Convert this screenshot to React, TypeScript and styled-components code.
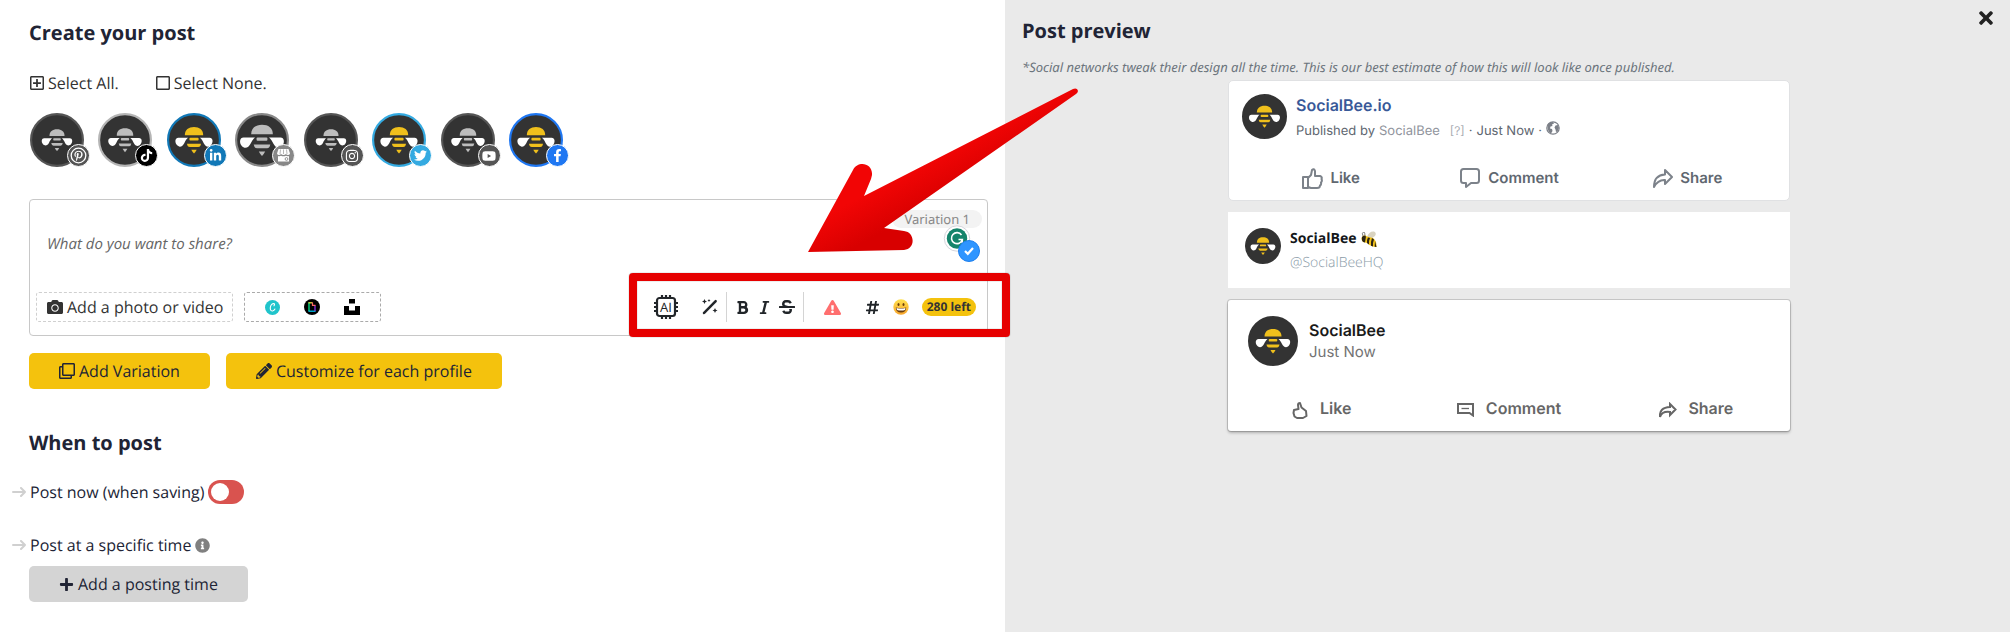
import React, { useState } from 'react';
import styled, { createGlobalStyle } from 'styled-components';
import {
  FaBold, FaItalic, FaStrikethrough, FaHashtag, FaCamera, FaRegClone, FaPencilAlt, FaPlus,
  FaInfoCircle, FaRegPlusSquare, FaRegSquare, FaPinterestP, FaTiktok, FaLinkedinIn,
  FaInstagram, FaTwitter, FaYoutube, FaFacebookF, FaExclamationTriangle, FaTimes,
} from 'react-icons/fa';

const sans = '"Open Sans", "Noto Sans", sans-serif';
const compact = '"Noto Sans", "Open Sans", sans-serif';
const ui = 'Inter, "Liberation Sans", sans-serif';

const Global = createGlobalStyle`
  * { box-sizing: border-box; }
  body {
    margin: 0;
    background: #fff;
    color: #212435;
    font: 16px/24px ${sans};
    text-rendering: geometricPrecision;
  }
  button, textarea { font: inherit; color: inherit; text-rendering: inherit; }
  button { background: none; border: 0; padding: 0; cursor: pointer; white-space: nowrap; }
  a { text-decoration: none; color: inherit; }
  svg { display: block; flex: none; }
`;

const Page = styled.div`
  display: grid;
  grid-template-columns: 1fr 1fr;
  min-height: 100vh;
`;

const Composer = styled.main`
  display: flex;
  flex-direction: column;
  align-items: flex-start;
  padding: 19px 17px 30px 29px;
`;

const Heading = styled.h2`
  margin: 0;
  font-size: 20px;
  line-height: 28px;
  font-weight: 700;
`;

const SelectRow = styled.div`
  display: flex;
  gap: 36px;
  margin: 24px 0 18px;
  color: #333;
`;

const SelectButton = styled.button`
  display: flex;
  align-items: center;
  gap: 3px;
`;

const Profiles = styled.div`
  display: flex;
  justify-content: space-between;
  width: 100%;
  max-width: 534px;
  padding-left: 1px;
`;

const Profile = styled.button`
  position: relative;
  width: 54px;
  height: 54px;
`;

const Badge = styled.span<{ $bg: string }>`
  position: absolute;
  right: -6px;
  bottom: 0;
  display: flex;
  align-items: center;
  justify-content: center;
  width: 23px;
  height: 23px;
  border: 1px solid #fff;
  border-radius: 50%;
  background: ${(p) => p.$bg};
  color: #fff;
`;

const Editor = styled.section`
  position: relative;
  display: flex;
  flex-direction: column;
  width: 100%;
  margin-top: 32px;
  border: 1px solid #c8c8c8;
  border-radius: 4px;
`;

const EditorBody = styled.div`
  display: flex;
  align-items: flex-start;
  height: 92px;
  padding: 10px 5px 0 17px;
`;

const PostText = styled.textarea`
  flex: 1;
  height: 60px;
  margin-top: 22px;
  padding: 0;
  border: 0;
  outline: 0;
  resize: none;
  background: transparent;
  font-size: 15px;
  &::placeholder { color: #666; font-style: italic; opacity: 1; }
`;

const VariationTag = styled.span`
  padding: 0 12px;
  border-radius: 9px;
  background: #f3f3f3;
  color: #888;
  font-family: ${compact};
  font-size: 13px;
  line-height: 18px;
`;

const Assistant = styled.div`
  position: absolute;
  right: 6px;
  top: 25px;
`;

const EditorFooter = styled.div`
  display: flex;
  align-items: center;
  justify-content: space-between;
  padding: 0 11px 13px 6px;
`;

const Row = styled.div<{ $gap: number }>`
  display: flex;
  align-items: center;
  gap: ${(p) => p.$gap}px;
`;

const PhotoButton = styled.button`
  display: flex;
  align-items: center;
  gap: 4px;
  height: 30px;
  padding: 0 9px 0 10px;
  border: 1px dashed #d0d0d0;
  border-radius: 3px;
  color: #333;
`;

const Sources = styled.div`
  display: flex;
  align-items: center;
  gap: 24px;
  height: 30px;
  padding: 0 20px;
  border: 1px dashed #aaa;
  border-radius: 3px;
`;

const ToolGroup = styled.div<{ $gap: number; $divided?: boolean; $left?: number }>`
  display: flex;
  align-items: center;
  gap: ${(p) => p.$gap}px;
  height: 30px;
  padding: 0 ${(p) => (p.$divided ? 8 : 0)}px 0 ${(p) => p.$left ?? 8}px;
  color: #212529;
  ${(p) => p.$divided && 'border-right: 1px solid #d4d4d4;'}
`;

const Counter = styled.span`
  padding: 0 5px;
  border-radius: 9px;
  background: #f4c20d;
  color: #333;
  font-size: 12px;
  line-height: 18px;
  font-weight: 700;
  white-space: nowrap;
`;

const Highlight = styled.div`
  position: absolute;
  right: -23px;
  top: 73px;
  width: 381px;
  height: 64px;
  border: 8px solid #e60000;
  border-radius: 4px;
  box-shadow: 0 0 1px #555, inset 0 0 1px #555;
  pointer-events: none;
`;

const Pointer = styled.svg`
  position: absolute;
  right: -94px;
  top: -119px;
  pointer-events: none;
`;

const Actions = styled.div`
  display: flex;
  gap: 16px;
  margin: 17px 0 40px;
`;

const ActionButton = styled.button<{ $plain?: boolean }>`
  display: flex;
  align-items: center;
  gap: 4px;
  height: 36px;
  padding: 0 30px;
  border-radius: 5px;
  background: ${(p) => (p.$plain ? '#d4d4d4' : '#f4c20d')};
`;

const Option = styled.div<{ $top: number }>`
  display: flex;
  align-items: center;
  gap: 4px;
  margin: ${(p) => p.$top}px 0 0 -17px;
`;

const Switch = styled.input`
  appearance: none;
  width: 36px;
  height: 24px;
  margin: 0;
  padding: 3px;
  border-radius: 12px;
  background: #d9534f;
  cursor: pointer;
  &::before {
    content: '';
    display: block;
    width: 18px;
    height: 18px;
    border-radius: 50%;
    background: #fff;
  }
  &:checked { background: #5cb85c; padding-left: 15px; }
`;

const TimeRow = styled.div`
  margin-top: 9px;
`;

const Preview = styled.aside`
  display: flex;
  flex-direction: column;
  padding: 8px 14px 30px 17px;
  background: #eaeaea;
`;

const PreviewHeader = styled.header`
  display: flex;
  justify-content: space-between;
  align-items: flex-start;
`;

const PreviewTitle = styled(Heading)`
  padding-top: 9px;
`;

const Note = styled.p`
  margin: 10px 0 1px;
  color: #6c757d;
  font-family: ${compact};
  font-size: 13px;
  line-height: 24px;
  font-style: italic;
`;

const Cards = styled.div`
  display: flex;
  flex-direction: column;
  width: 100%;
  max-width: 562px;
  margin: 0 auto;
  font-family: ${ui};
`;

const FacebookCard = styled.article`
  height: 121px;
  padding: 13px 12px 0 13px;
  border: 1px solid #e0e1e3;
  border-radius: 5px;
  background: #fff;
  color: #606770;
`;

const TwitterCard = styled.article`
  display: flex;
  gap: 9px;
  height: 76px;
  margin: 11px 0 12px;
  padding: 16px 17px;
  background: #fff;
  font-family: ${sans};
`;

const LinkedinCard = styled.article`
  height: 131px;
  padding: 16px 0 0;
  border-radius: 3px;
  background: #fff;
  box-shadow: 0 0 0 1px rgba(0, 0, 0, 0.15), 0 2px 3px rgba(0, 0, 0, 0.25);
  color: #666;
`;

const CardHead = styled.div<{ $gap: number; $inset?: number; $center?: boolean }>`
  display: flex;
  align-items: ${(p) => (p.$center ? 'center' : 'flex-start')};
  gap: ${(p) => p.$gap}px;
  padding-left: ${(p) => p.$inset ?? 0}px;
`;

const Name = styled.a<{ $color: string; $size?: number; $weight?: number }>`
  display: flex;
  align-items: center;
  gap: 4px;
  color: ${(p) => p.$color};
  font-size: ${(p) => p.$size ?? 16}px;
  line-height: 22px;
  font-weight: ${(p) => p.$weight ?? 600};
`;

const Meta = styled.div`
  display: flex;
  align-items: center;
  gap: 4px;
  margin-top: 4px;
  font-size: 13px;
  line-height: 22px;
  & > svg { margin-bottom: 6px; }
`;

const Muted = styled.span`
  color: #90949c;
  margin-right: 6px;
`;

const Small = styled.span`
  color: #a9acb2;
  font-size: 12px;
`;

const Handle = styled.div`
  color: #8899a6;
  font-size: 14px;
  line-height: 26px;
  font-weight: 300;
`;

const When = styled.div`
  font-size: 15px;
  line-height: 22px;
  color: #737373;
`;

const Reactions = styled.div<{ $top: number }>`
  display: grid;
  grid-template-columns: repeat(3, 1fr);
  justify-items: center;
  margin-top: ${(p) => p.$top}px;
`;

const Reaction = styled.button<{ $gap: number; $size: number; $low?: boolean }>`
  display: flex;
  align-items: center;
  gap: ${(p) => p.$gap}px;
  font-size: ${(p) => p.$size}px;
  font-weight: 600;
  & > svg { margin-top: ${(p) => (p.$low ? 4 : 0)}px; }
`;

type BeeProps = { size: number; ring?: string; color?: string; scale?: number };

const Bee = ({ size, ring = '#333', color = '#f0c01c', scale = 1 }: BeeProps) => (
  <svg width={size} height={size} viewBox="-50 -50 100 100" aria-hidden="true">
    <circle r="48" fill="#333" stroke={ring} strokeWidth="4" />
    <g transform={`scale(${scale})`}>
      <path d="M-17-9C-17-19-10-24 0-24S17-19 17-9Z" fill={color} />
      <rect x="-8.500" y="-4" width="17" height="5" rx="1.500" fill={color} />
      <path d="M-11-4H-29C-35-4-36 4-32 9C-27 15-21 12-18 6C-16 2-14-2-11-4Z" fill="#fff" />
      <path d="M11-4H29C35-4 36 4 32 9C27 15 21 12 18 6C16 2 14-2 11-4Z" fill="#fff" />
      <path d="M-13 7H13Q12 13 8 13H-8Q-12 13-13 7Z" fill={color} />
      <path d="M-5 18H5Q3 22 0 25Q-3 22-5 18Z" fill={color} />
    </g>
  </svg>
);

const AiChip = () => (
  <svg width="24" height="24" viewBox="0 0 24 24" fill="none" stroke="#212529" strokeWidth="2.200">
    <rect x="3" y="3" width="18" height="18" rx="2.500" />
    <path d="M8 0v3M12 0v3M16 0v3M8 21v3M12 21v3M16 21v3M0 8h3M0 12h3M0 16h3M21 8h3M21 12h3M21 16h3" />
    <text x="12" y="16.500" textAnchor="middle" fontSize="13" fontWeight="500" fontFamily="Open Sans" fill="#212529" stroke="none">AI</text>
  </svg>
);

const Wand = () => (
  <svg width="16" height="16" viewBox="0 0 16 16" fill="#212529">
    <path d="M1 13.200L12.800 1.200Q13.600.400 14.500 1.200Q15.300 2 14.600 2.900L3 14.800Q2 15.600 1.200 14.900Q.3 14.100 1 13.200Z" />
    <path d="M2.500 0l.8 1.700L5 2.500l-1.700.8L2.500 5l-.8-1.700L0 2.500l1.700-.8ZM7 0l.5 1L8.500 1.500 7.500 2 7 3l-.5-1-1-.5 1-.5ZM13 9l.8 1.700 1.700.8-1.700.8L13 14l-.8-1.700-1.700-.8 1.700-.8Z" />
  </svg>
);

const Grin = () => (
  <svg width="16" height="16" viewBox="0 0 16 16">
    <defs>
      <linearGradient id="face" x1="0" y1="0" x2="0" y2="1">
        <stop offset="0" stopColor="#ffe14f" />
        <stop offset="1" stopColor="#f7a52b" />
      </linearGradient>
    </defs>
    <circle cx="8" cy="8" r="7.700" fill="url(#face)" />
    <ellipse cx="5.500" cy="5.500" rx="1" ry="1.600" fill="#6b3d0c" />
    <ellipse cx="10.500" cy="5.500" rx="1" ry="1.600" fill="#6b3d0c" />
    <path d="M2.800 8.500Q8 9.500 13.200 8.500Q13 13.500 8 13.500T2.800 8.500Z" fill="#6b3d0c" />
    <path d="M3.500 9Q8 10 12.500 9L12 11Q8 12 4 11Z" fill="#fff" />
  </svg>
);

const BeeEmoji = () => (
  <svg width="16" height="17" viewBox="0 0 16 17">
    <path d="M6 6Q8 0 13 .5Q16 2 14 5Q11 8 7 7Z" fill="#d9d3c0" />
    <path d="M1 6Q3 3 6 5.500L12 7Q16 10 15.500 16Q10 16 6 12L2 11Q-.5 8 1 6Z" fill="#f2c21a" />
    <path d="M1 6Q3 4 5 5.500L4 11.500Q0 11 1 6ZM7 6.500L9 7Q7.500 10 8 13.500L6 12Q5.500 9 7 6.500ZM11 7L13 8.500Q11.500 12 12 15.500L10 14.800Q9.500 11 11 7ZM14 10L15.500 16L13.700 15.800Z" fill="#2b2415" />
    <path d="M2 5Q.5 2 2.500 1M4 5Q4 2 3 1" stroke="#444" strokeWidth=".7" fill="none" />
  </svg>
);

const Canva = () => (
  <svg width="15" height="15" viewBox="0 0 15 15">
    <circle cx="7.500" cy="7.500" r="7.500" fill="#20c4cb" />
    <path d="M9 5.800Q10.300 3.800 8.600 3.600C6.500 3.500 5 6.500 5.300 8.800Q5.800 11.500 8 10.800Q9.300 10.300 9.900 9" fill="none" stroke="#fff" strokeWidth="1.100" strokeLinecap="round" />
  </svg>
);

const Giphy = () => (
  <svg width="16" height="16" viewBox="0 0 16 16" fill="none" strokeWidth="1.200">
    <circle cx="8" cy="8" r="8" fill="#000" />
    <path d="M5 3.500V12" stroke="#0f9" />
    <path d="M4.400 12.200H11.600" stroke="#0cf" />
    <path d="M11 6.500V12" stroke="#93f" />
    <path d="M4.400 3.800H8.500" stroke="#ee4" />
    <path d="M8.500 3.500V6.300H11.500" stroke="#f66" />
  </svg>
);

const Unsplash = () => (
  <svg width="16" height="16" viewBox="0 0 16 16"><path d="M5 0h6v4.500H5zM0 7h5v4.500h6V7h5v9H0z" /></svg>
);

const Arrow = () => (
  <svg width="14" height="10" viewBox="0 0 14 10" fill="none" stroke="#d0d0d0" strokeWidth="2" strokeLinecap="round" strokeLinejoin="round">
    <path d="M1 5H13M9 1L13 5L9 9" />
  </svg>
);

const Globe = () => (
  <svg width="14" height="14" viewBox="0 0 14 14">
    <circle cx="7" cy="7" r="6.200" fill="#fff" stroke="#7b7f87" strokeWidth="1.200" />
    <path d="M1.500 4Q3 1 7 1L8 2.500L6 3.500L6.500 5L4.500 5.500L4 7.500L6 8L6.500 10L5 12.500Q1 10.500 1.500 4ZM9.500 4.500L12 4L13 7L11.500 10.500L10 11L9.500 8.500L8.500 6.500Z" fill="#7b7f87" />
  </svg>
);

const line = { fill: 'none', stroke: '#7c828a', strokeWidth: 2, strokeLinejoin: 'round' as const };

const FbLike = () => (
  <svg width="21" height="21" viewBox="0 0 21 21" {...line}>
    <path d="M1 9H6V20H1ZM6 10L9 7L10 2Q12 0 13 3V8H18Q20.500 9 19.500 11Q20.500 13 19 14.500Q19.500 17 18 17.500Q18 20 15 20H9L6 19" />
  </svg>
);
const FbComment = () => (
  <svg width="20" height="20" viewBox="0 0 20 20" {...line}>
    <path d="M3.500 1H16.500Q19 1 19 3.500V12.500Q19 15 16.500 15H11L6 19V15H3.500Q1 15 1 12.500V3.500Q1 1 3.500 1Z" />
  </svg>
);
const FbShare = () => (
  <svg width="20" height="19" viewBox="0 0 20 19" {...line}>
    <path d="M12 1L19 8L12 15V11Q5 10.500 1 18Q1 6 12 5.500Z" />
  </svg>
);
const InLike = () => (
  <svg width="16" height="17" viewBox="0 0 16 17" fill="none" stroke="#666" strokeWidth="2">
    <path d="M2 8L6.500 7L6 3Q6 1 8 1L9.500 5.500L14 9L14.500 14L11 16H5L2.500 14.500L1.500 11Z" strokeLinejoin="round" />
  </svg>
);
const InComment = () => (
  <svg width="17" height="14" viewBox="0 0 17 14" fill="none" stroke="#666" strokeWidth="2">
    <path d="M1 1H16V12.500L12.500 10H1Z" />
    <path d="M4.500 5.500H12" strokeWidth="1.300" />
  </svg>
);
const InShare = () => (
  <svg width="18" height="16" viewBox="0 0 18 16" fill="none" stroke="#666" strokeWidth="2">
    <path d="M11 2L16.500 7.500L11 13V10Q3 9 1 15Q0 5.500 11 5Z" />
  </svg>
);

const Grammar = () => (
  <svg width="38" height="38" viewBox="0 0 38 38">
    <circle cx="14" cy="13.500" r="12.700" fill="#fff" stroke="#d5d5dc" />
    <circle cx="14" cy="13.500" r="10.200" fill="#15846b" />
    <path d="M18.500 10A5.500 5.500 0 1 0 19.300 14.500H15.500M19.300 14V18" fill="none" stroke="#fff" strokeWidth="1.600" />
    <circle cx="26" cy="26" r="10.500" fill="#2e95ff" stroke="#1f80ee" />
    <path d="M22 26L24.800 28.800L30 23" fill="none" stroke="#fff" strokeWidth="2.200" />
  </svg>
);

const RingedPin = () => (
  <svg width="17" height="17" viewBox="0 0 17 17">
    <circle cx="8.500" cy="8.500" r="7.300" fill="none" stroke="#fff" strokeWidth="1.300" />
    <FaPinterestP x="3" y="3.500" size={11} />
  </svg>
);

const Shop = () => (
  <svg width="13" height="13" viewBox="0 0 13 13" fill="#fff">
    <path d="M1.500 0H11.500L13 4.500Q12.500 6 11 6Q9.700 6 9 5Q8 6 6.500 6T4 5Q3.300 6 2 6Q.5 6 0 4.500Z" />
    <path d="M1 7Q3 7.500 4 6.700Q6.500 8 9 6.700Q10.500 7.500 12 7V12.500H1Z" />
    <path d="M3.500.5L3 5M6.500.5V5M9.500.5L10 5" stroke="#888" strokeWidth=".6" />
    <circle cx="9.500" cy="10" r="1.400" fill="none" stroke="#888" strokeWidth=".9" />
  </svg>
);

const silver = '#bdbdbd';
const profiles = [
  { name: 'Pinterest', ring: '#555', bg: '#555', color: silver, scale: 0.82, icon: <RingedPin /> },
  { name: 'TikTok', ring: '#b5b5b5', bg: '#000', color: silver, scale: 0.9, icon: <FaTiktok size={13} /> },
  { name: 'LinkedIn', ring: '#1178b7', bg: '#1178b7', scale: 1, icon: <FaLinkedinIn size={13} /> },
  { name: 'Google Business Profile', ring: '#888', bg: '#888', color: silver, scale: 1.18, icon: <Shop /> },
  { name: 'Instagram', ring: '#555', bg: '#555', color: silver, scale: 0.82, icon: <FaInstagram size={14} /> },
  { name: 'Twitter', ring: '#34aae1', bg: '#34aae1', scale: 1, icon: <FaTwitter size={13} /> },
  { name: 'YouTube', ring: '#555', bg: '#555', color: silver, scale: 0.9, icon: <FaYoutube size={14} /> },
  { name: 'Facebook', ring: '#1f77f2', bg: '#1f77f2', scale: 1, icon: <FaFacebookF size={13} /> },
];

export default function App() {
  const [text, setText] = useState('');
  return (
    <Page>
      <Global />
      <Composer>
        <Heading>Create your post</Heading>
        <SelectRow>
          <SelectButton><FaRegPlusSquare size={16} />Select All.</SelectButton>
          <SelectButton><FaRegSquare size={16} />Select None.</SelectButton>
        </SelectRow>
        <Profiles>
          {profiles.map((p) => (
            <Profile key={p.name} aria-label={p.name}>
              <Bee size={54} ring={p.ring} color={p.color} scale={p.scale} />
              <Badge $bg={p.bg}>{p.icon}</Badge>
            </Profile>
          ))}
        </Profiles>
        <Editor>
          <EditorBody>
            <PostText
              aria-label="Post content"
              placeholder="What do you want to share?"
              value={text}
              onChange={(e) => setText(e.target.value)}
            />
            <VariationTag>Variation 1</VariationTag>
          </EditorBody>
          <Assistant><Grammar /></Assistant>
          <EditorFooter>
            <Row $gap={11}>
              <PhotoButton><FaCamera size={16} />Add a photo or video</PhotoButton>
              <Sources>
                <button aria-label="Canva"><Canva /></button>
                <button aria-label="Giphy"><Giphy /></button>
                <button aria-label="Unsplash"><Unsplash /></button>
              </Sources>
            </Row>
            <Row $gap={0}>
              <ToolGroup $gap={24} $divided>
                <button aria-label="AI"><AiChip /></button>
                <button aria-label="Magic"><Wand /></button>
              </ToolGroup>
              <ToolGroup $gap={7} $divided>
                <button aria-label="Bold"><FaBold size={15} /></button>
                <button aria-label="Italic"><FaItalic size={15} /></button>
                <button aria-label="Strikethrough"><FaStrikethrough size={16} /></button>
              </ToolGroup>
              <ToolGroup $gap={24} $left={20}>
                <button aria-label="Warnings"><FaExclamationTriangle size={17} color="#ff6f6f" /></button>
                <Row $gap={13}>
                  <button aria-label="Hashtags"><FaHashtag size={15} /></button>
                  <button aria-label="Emoji"><Grin /></button>
                  <Counter>280 left</Counter>
                </Row>
              </ToolGroup>
            </Row>
          </EditorFooter>
          <Highlight />
          <Pointer width="276" height="176" viewBox="805 81 276 176">
            <defs>
              <linearGradient id="red" gradientUnits="userSpaceOnUse" x1="900" y1="175" x2="920" y2="212">
                <stop offset="0" stopColor="#f20505" />
                <stop offset="1" stopColor="#d80000" />
              </linearGradient>
            </defs>
            <path
              d="M808 252L853 170C858 160 873 163 872 175L871 179L864 196L1073 89C1077 87 1080 91 1076 94L884 228L904 231C915 232 916 249 904 250Z"
              fill="url(#red)"
            />
          </Pointer>
        </Editor>
        <Actions>
          <ActionButton><FaRegClone size={16} />Add Variation</ActionButton>
          <ActionButton><FaPencilAlt size={16} />Customize for each profile</ActionButton>
        </Actions>
        <Heading>When to post</Heading>
        <Option $top={23}>
          <Arrow />
          <label htmlFor="post-now">Post now (when saving)</label>
          <Switch id="post-now" type="checkbox" role="switch" />
        </Option>
        <Option $top={29}>
          <Arrow />
          Post at a specific time
          <FaInfoCircle size={15} color="#808080" />
        </Option>
        <TimeRow>
          <ActionButton $plain><FaPlus size={15} />Add a posting time</ActionButton>
        </TimeRow>
      </Composer>
      <Preview>
        <PreviewHeader>
          <PreviewTitle>Post preview</PreviewTitle>
          <button aria-label="Close"><FaTimes size={20} color="#222" /></button>
        </PreviewHeader>
        <Note>*Social networks tweak their design all the time. This is our best estimate of how this will look like once published.</Note>
        <Cards>
          <FacebookCard>
            <CardHead $gap={9}>
              <Bee size={45} />
              <div>
                <Name href="#" $color="#385898">SocialBee.io</Name>
                <Meta>
                  Published by <Muted>SocialBee</Muted> <Small>[?]</Small> · <span>Just Now</span> · <Globe />
                </Meta>
              </div>
            </CardHead>
            <Reactions $top={24}>
              <Reaction $gap={7} $size={15}><FbLike />Like</Reaction>
              <Reaction $gap={8} $size={15}><FbComment />Comment</Reaction>
              <Reaction $gap={7} $size={15}><FbShare />Share</Reaction>
            </Reactions>
          </FacebookCard>
          <TwitterCard>
            <Bee size={36} />
            <div>
              <Name href="#" $color="#14171a" $size={14} $weight={700}>SocialBee<BeeEmoji /></Name>
              <Handle>@SocialBeeHQ</Handle>
            </div>
          </TwitterCard>
          <LinkedinCard>
            <CardHead $gap={11} $inset={20} $center>
              <Bee size={50} />
              <div>
                <Name href="#" $color="#1a1a1a">SocialBee</Name>
                <When>Just Now</When>
              </div>
            </CardHead>
            <Reactions $top={30}>
              <Reaction $gap={12} $size={16} $low><InLike />Like</Reaction>
              <Reaction $gap={12} $size={16} $low><InComment />Comment</Reaction>
              <Reaction $gap={11} $size={16} $low><InShare />Share</Reaction>
            </Reactions>
          </LinkedinCard>
        </Cards>
      </Preview>
    </Page>
  );
}
